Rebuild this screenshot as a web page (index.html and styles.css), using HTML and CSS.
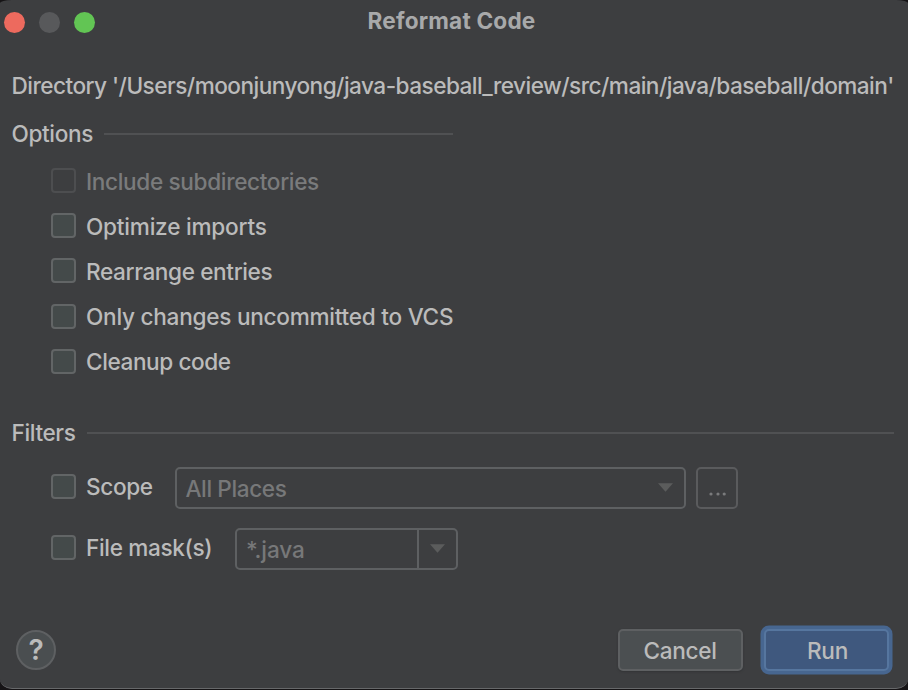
FILE: index.html
```html
<!DOCTYPE html>
<html lang="en">
<head>
<meta charset="utf-8">
<title>Reformat Code</title>
<link rel="stylesheet" href="styles.css">
</head>
<body>
<main class="dialog">
  <header class="titlebar">
    <div class="lights"><span class="light close"></span><span class="light minimize"></span><span class="light expand"></span></div>
    <h1 class="title">Reformat Code</h1>
  </header>
  <p class="directory">Directory '/Users/moonjunyong/java-baseball_review/src/main/java/baseball/domain'</p>
  <section class="options">
    <h2 class="section-head"><span>Options</span><span class="rule"></span></h2>
    <div class="checks">
      <div class="check disabled"><span class="box"></span><span class="label">Include subdirectories</span></div>
      <div class="check optimize"><span class="box"></span><span class="label">Optimize imports</span></div>
      <div class="check rearrange"><span class="box"></span><span class="label">Rearrange entries</span></div>
      <div class="check only"><span class="box"></span><span class="label">Only changes uncommitted to VCS</span></div>
      <div class="check cleanup"><span class="box"></span><span class="label">Cleanup code</span></div>
    </div>
  </section>
  <section class="filters">
    <h2 class="section-head"><span>Filters</span><span class="rule"></span></h2>
    <div class="filter-row">
      <div class="check scope"><span class="box"></span><span class="label">Scope</span></div>
      <div class="combo places"><span class="value">All Places</span><svg class="arrow" viewBox="0 0 16 9"><path d="M0 0H16L8 9Z"/></svg></div>
      <div class="more"><svg viewBox="0 0 18 4"><circle cx="2" cy="2" r="1.6"/><circle cx="9" cy="2" r="1.6"/><circle cx="15.2" cy="2" r="1.6"/></svg></div>
    </div>
    <div class="filter-row">
      <div class="check mask"><span class="box"></span><span class="label">File mask(s)</span></div>
      <div class="combo java"><span class="value">*.java</span><span class="drop"><svg class="arrow" viewBox="0 0 16 9"><path d="M0 0H16L8 9Z"/></svg></span></div>
    </div>
  </section>
  <footer class="footer">
    <div class="help">?</div>
    <div class="button cancel">Cancel</div>
    <div class="button run">Run</div>
  </footer>
</main>
</body>
</html>
```

FILE: styles.css
```css
* { box-sizing: border-box; }
html { background: #161416; }
body { margin: 0; width: 908px; height: 690px; overflow: hidden; font-family: Inter, "Liberation Sans", sans-serif; font-size: 22.6px; font-weight: 450; line-height: 28px; color: #bbbbbb; }
.dialog { height: 689px; background: #3d3e40; border-radius: 12px / 3px 3px 10px 10px; border-bottom: 1px solid #67686a; display: flex; flex-direction: column; overflow: hidden; white-space: nowrap; }
.titlebar { height: 43px; flex: none; display: grid; grid-template-columns: 95px 1fr 104px; align-items: center; padding-left: 4px; }
.lights { display: flex; gap: 14px; padding-top: 1px; }
.light { width: 21px; height: 21px; border-radius: 50%; }
.close { background: #ed6a5e; }
.minimize { background: #58595b; }
.expand { background: #62c554; }
.title { margin: -2px 0 0; text-align: center; font-size: 22.6px; line-height: 28px; font-weight: 700; letter-spacing: 0.2px; color: #a8a9aa; }
.directory { margin: 29px 0 0 11.5px; height: 28px; letter-spacing: -0.53px; }
.section-head { margin: 0; font-size: 22.6px; font-weight: 450; letter-spacing: -0.38px; height: 28px; display: flex; align-items: center; gap: 11px; }
.rule { flex: 1; height: 2px; background: #505153; }
.options { margin: 20px 0 0 11.5px; width: 441px; }
.checks { margin: 10px 0 0 39.5px; }
.check { height: 45.2px; display: flex; align-items: center; gap: 10px; letter-spacing: -0.35px; }
.label { padding-top: 2px; }
.box { flex: none; width: 25px; height: 25px; border: 2px solid #626566; border-radius: 4px; background: #444a4a; }
.disabled { color: #7a7b7c; }
.optimize { letter-spacing: -0.22px; }
.only { letter-spacing: -0.26px; }
.cleanup { letter-spacing: -0.42px; }
.rearrange { letter-spacing: -0.38px; }
.disabled .box { background: none; border-color: #4d4e50; }
.filters { margin: 35px 14px 0 11.5px; }
.filter-row { display: flex; align-items: center; height: 42px; margin: 20px 0 0 39.5px; }
.filter-row + .filter-row { margin-top: 19px; }
.filter-row .check { height: 39px; align-self: flex-start; }
.scope { width: 123.5px; }
.mask { width: 184px; }
.combo { height: 42px; border: 2px solid #5e6062; border-radius: 5px; display: flex; align-items: center; padding-left: 9px; color: #777879; letter-spacing: -0.4px; }
.value { flex: 1; padding-top: 2px; }
.arrow { width: 15px; height: 9px; fill: #5b5c5c; }
.places { width: 511px; padding-right: 11px; }
.java { width: 223px; letter-spacing: -0.1px; }
.drop { height: 100%; width: 39px; border-left: 2px solid #5e6062; display: flex; align-items: center; justify-content: center; }
.more { width: 42px; height: 42px; margin-left: 10px; border: 2px solid #5a5b5d; border-radius: 5px; display: flex; align-items: flex-end; justify-content: center; padding: 0 0 11px 2px; }
.more svg { width: 18px; height: 4px; fill: #7a7b7c; }
.footer { margin-top: 55px; padding: 0 16px; height: 50px; display: flex; align-items: center; }
.help { width: 40px; height: 40px; margin-right: auto; border: 2px solid #5e6062; border-radius: 50%; background: #4a4e50; display: flex; align-items: center; justify-content: center; font-size: 28px; font-weight: 600; }
.button { height: 42px; display: flex; align-items: center; justify-content: center; border: 2px solid #5e6062; border-radius: 5px; background: #4b4f51; padding-top: 2px; letter-spacing: -0.3px; }
.cancel { width: 125px; box-shadow: 0 1px 2px #333436; }
.run { width: 125px; margin: 0 3.5px 0 21px; padding-left: 3px; border: 2px solid #56769f; background: #3f587e; box-shadow: 0 0 0 3.5px #476690; }
```
